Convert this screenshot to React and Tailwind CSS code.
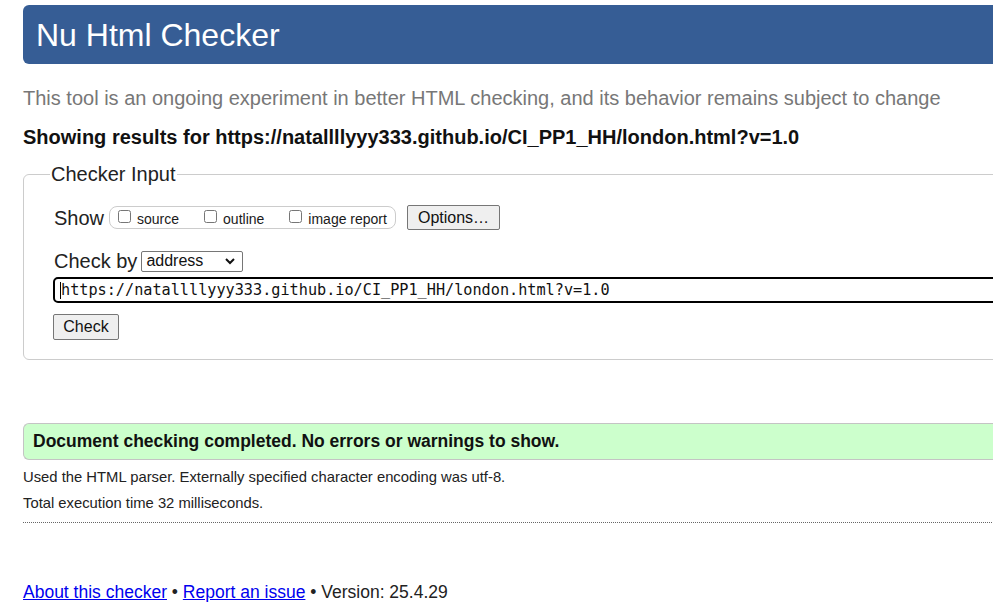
import { useState } from 'react';

const sans = { fontFamily: '"Liberation Sans", Arial, sans-serif' };

export default function App() {
  const [url, setUrl] = useState('https://natallllyyy333.github.io/CI_PP1_HH/london.html?v=1.0');

  return (
    <div className="w-[993px] h-[612px] overflow-hidden bg-white text-[#1a1a1a]" style={sans}>
      <div className="w-[1120px] pl-[23px] pt-[5px]">
        {/* Header */}
        <div className="h-[59px] bg-[#365d95] rounded-l-md flex items-center pl-[13px]">
          <h1 className="text-white text-[32px] leading-none">Nu Html Checker</h1>
        </div>

        <p className="mt-[22px] text-[20px] leading-[24px] text-[#777]">
          This tool is an ongoing experiment in better HTML checking, and its behavior remains subject to change
        </p>
        <p className="mt-[15px] text-[20px] leading-[24px] font-bold text-[#111]">
          Showing results for https://natallllyyy333.github.io/CI_PP1_HH/london.html?v=1.0
        </p>

        {/* Checker input */}
        <fieldset className="mt-[13px] h-[198px] border border-[#ccc] rounded-md">
          <legend className="ml-[26px] px-[1px] text-[20px] leading-[24px] text-[#222]">Checker Input</legend>

          <div className="pl-[30px]">
            <div className="flex items-center mt-[19px]">
              <span className="text-[20px] leading-[24px] text-[#222]">Show</span>
              <div className="ml-[5px] h-[23px] w-[287px] border border-[#ccc] rounded-[8px] flex items-center pl-[8px] text-[14px]">
                <label className="flex items-center">
                  <input type="checkbox" className="w-[13px] h-[13px] m-0 -mt-[3px]" />
                  <span className="ml-[6px] mt-[3px]">source</span>
                </label>
                <label className="flex items-center ml-[25px]">
                  <input type="checkbox" className="w-[13px] h-[13px] m-0 -mt-[3px]" />
                  <span className="ml-[6px] mt-[3px]">outline</span>
                </label>
                <label className="flex items-center ml-[25px]">
                  <input type="checkbox" className="w-[13px] h-[13px] m-0 -mt-[3px]" />
                  <span className="ml-[6px] mt-[3px]">image report</span>
                </label>
              </div>
              <button className="ml-[11px] h-[25px] w-[93px] border border-[#767676] rounded-[2px] bg-[#efefef] text-[16px] leading-none text-[#111]">
                Options…
              </button>
            </div>

            <div className="flex items-center mt-[19px]">
              <span className="text-[20px] leading-[24px] text-[#222]">Check by</span>
              <div className="ml-[4px] h-[21px] w-[102px] border border-[#767676] rounded-[2px] flex items-center justify-between pl-[4px] pr-[6px]">
                <span className="text-[16px] leading-none text-[#111]">address</span>
                <svg width="12" height="8" viewBox="0 0 12 8" fill="none" stroke="#111" strokeWidth="2">
                  <path d="M2 2l4 4 4-4" />
                </svg>
              </div>
            </div>

            <div className="mt-[4px] -ml-px h-[26px] border-2 border-black rounded-[5px] flex items-center pl-[5px]">
              <span className="w-px h-[17px] bg-black" />
              <input
                value={url}
                onChange={e => setUrl(e.target.value)}
                className="flex-1 outline-none text-[15.2px] leading-none text-[#111] bg-transparent"
                style={{ fontFamily: '"DejaVu Sans Mono", "Liberation Mono", monospace' }}
              />
            </div>

            <button className="mt-[11px] h-[26px] w-[66px] -ml-px border border-[#767676] rounded-[2px] bg-[#efefef] text-[16px] leading-none text-[#111]">
              Check
            </button>
          </div>
        </fieldset>

        {/* Result */}
        <div className="mt-[63px] h-[37px] bg-[#ccffcc] border-y border-l border-[#c4c4c4] rounded-l-md flex items-center pl-[9px]">
          <span className="text-[17.5px] font-bold text-[#111]">Document checking completed. No errors or warnings to show.</span>
        </div>

        <p className="mt-[9px] text-[14.8px] leading-[17px] text-[#222]">
          Used the HTML parser. Externally specified character encoding was utf-8.
        </p>
        <p className="mt-[9px] text-[14.8px] leading-[17px] text-[#222]">Total execution time 32 milliseconds.</p>
        <div className="mt-[10px] border-t border-dotted border-[#666]" />

        {/* Footer */}
        <p className="mt-[59px] text-[17.5px] leading-[20px] text-[#222]">
          <a href="#" className="text-[#0000ee] underline">About this checker</a>
          {' • '}
          <a href="#" className="text-[#0000ee] underline">Report an issue</a>
          {' • Version: 25.4.29'}
        </p>
      </div>
    </div>
  );
}
